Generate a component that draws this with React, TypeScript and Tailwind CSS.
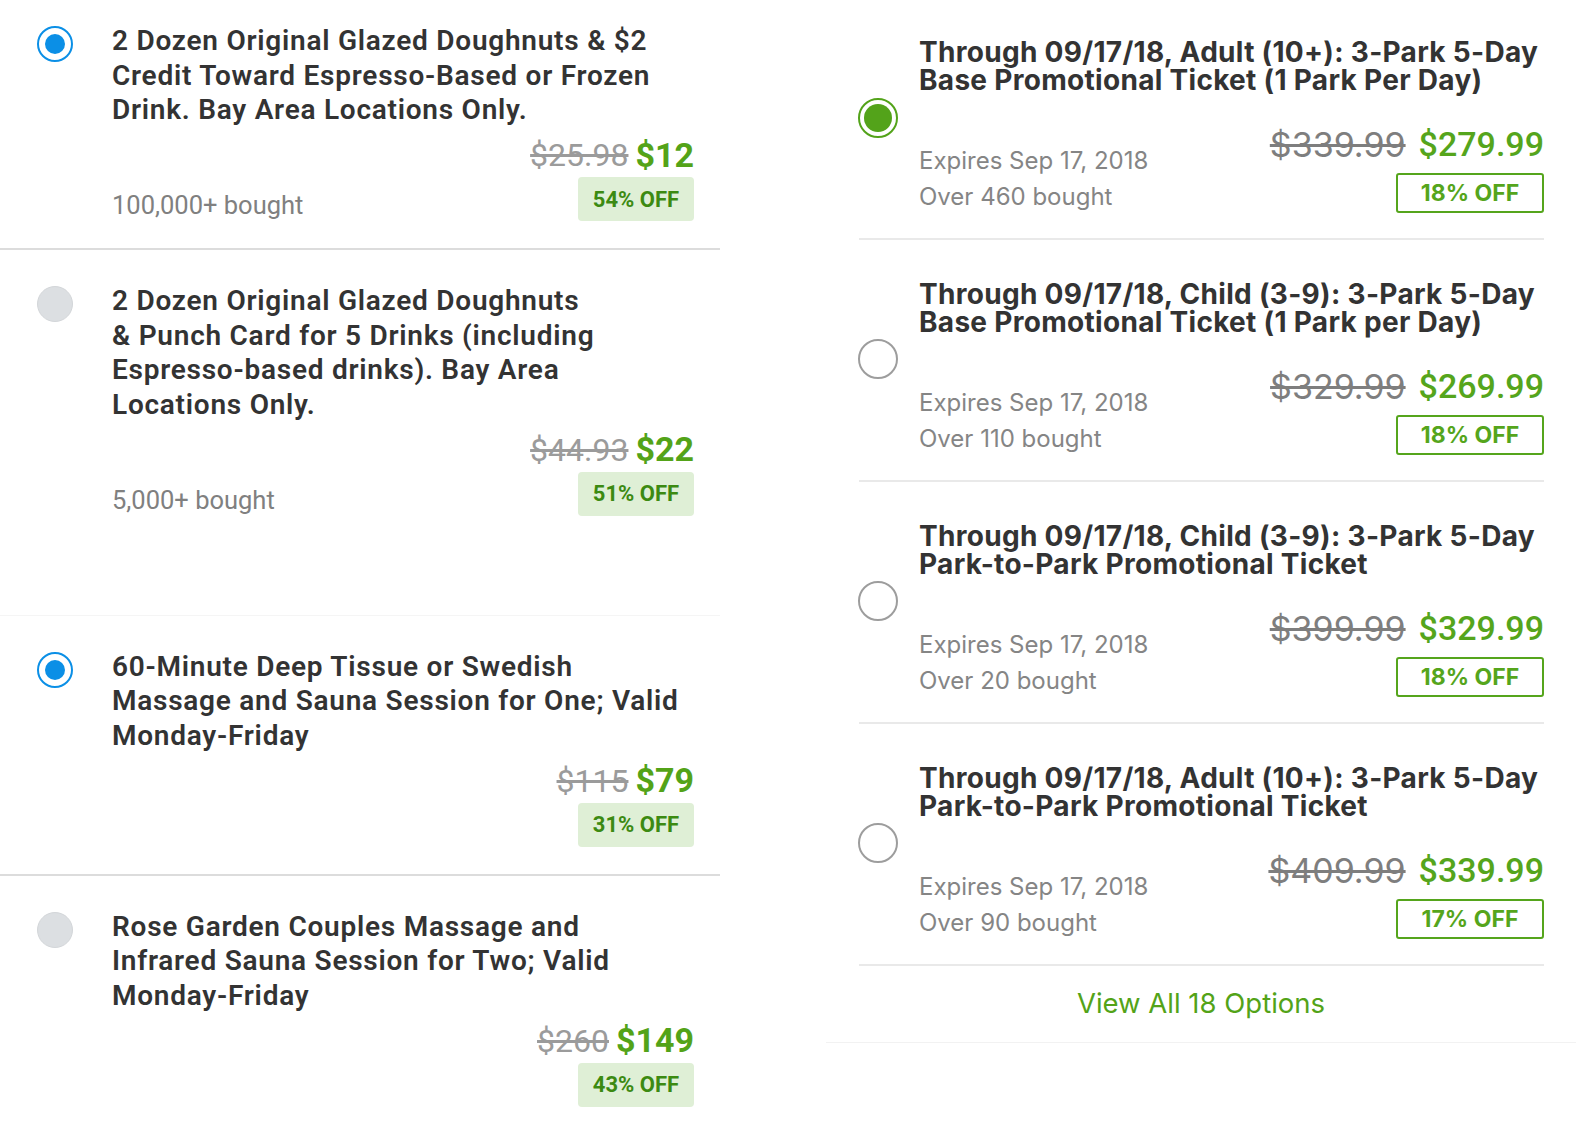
import React from "react";

type LeftDeal = {
    lines: string[];
    was: string;
    now: string;
    off: string;
    bought?: string;
    selected: boolean;
};

type RightDeal = {
    lines: string[];
    was: string;
    now: string;
    off: string;
    bought: string;
    selected: boolean;
};

const leftDeals: LeftDeal[] = [
    {
        lines: [
            "2 Dozen Original Glazed Doughnuts & $2",
            "Credit Toward Espresso-Based or Frozen",
            "Drink. Bay Area Locations Only.",
        ],
        was: "$25.98",
        now: "$12",
        off: "54% OFF",
        bought: "100,000+ bought",
        selected: true,
    },
    {
        lines: [
            "2 Dozen Original Glazed Doughnuts",
            "& Punch Card for 5 Drinks (including",
            "Espresso-based drinks). Bay Area",
            "Locations Only.",
        ],
        was: "$44.93",
        now: "$22",
        off: "51% OFF",
        bought: "5,000+ bought",
        selected: false,
    },
    {
        lines: [
            "60-Minute Deep Tissue or Swedish",
            "Massage and Sauna Session for One; Valid",
            "Monday-Friday",
        ],
        was: "$115",
        now: "$79",
        off: "31% OFF",
        selected: true,
    },
    {
        lines: [
            "Rose Garden Couples Massage and",
            "Infrared Sauna Session for Two; Valid",
            "Monday-Friday",
        ],
        was: "$260",
        now: "$149",
        off: "43% OFF",
        selected: false,
    },
];

const rightDeals: RightDeal[] = [
    {
        lines: ["Through 09/17/18, Adult (10+): 3-Park 5-Day", "Base Promotional Ticket (1 Park Per Day)"],
        was: "$339.99",
        now: "$279.99",
        off: "18% OFF",
        bought: "Over 460 bought",
        selected: true,
    },
    {
        lines: ["Through 09/17/18, Child (3-9): 3-Park 5-Day", "Base Promotional Ticket (1 Park per Day)"],
        was: "$329.99",
        now: "$269.99",
        off: "18% OFF",
        bought: "Over 110 bought",
        selected: false,
    },
    {
        lines: ["Through 09/17/18, Child (3-9): 3-Park 5-Day", "Park-to-Park Promotional Ticket"],
        was: "$399.99",
        now: "$329.99",
        off: "18% OFF",
        bought: "Over 20 bought",
        selected: false,
    },
    {
        lines: ["Through 09/17/18, Adult (10+): 3-Park 5-Day", "Park-to-Park Promotional Ticket"],
        was: "$409.99",
        now: "$339.99",
        off: "17% OFF",
        bought: "Over 90 bought",
        selected: false,
    },
];

function LeftRadio({ selected }: { selected: boolean }) {
    if (selected) {
        return (
            <div className="w-[36px] h-[36px] rounded-full border-2 border-[#0b8fe6] flex items-center justify-center">
                <div className="w-[20px] h-[20px] rounded-full bg-[#0b8fe6]" />
            </div>
        );
    }
    return <div className="w-[36px] h-[36px] rounded-full bg-[#dcdfe2] border border-[#d3d6d9]" />;
}

function RightRadio({ selected }: { selected: boolean }) {
    if (selected) {
        return (
            <div className="w-[40px] h-[40px] rounded-full border-2 border-[#53a31a] flex items-center justify-center">
                <div className="w-[28px] h-[28px] rounded-full bg-[#53a31a]" />
            </div>
        );
    }
    return <div className="w-[40px] h-[40px] rounded-full border-2 border-[#9d9d9d]" />;
}

function LeftItem({ deal, first }: { deal: LeftDeal; first: boolean }) {
    return (
        <div className={`flex pr-[26px] pb-[27px] ${first ? "pt-[24px]" : "pt-[34px]"}`}>
            <div className="w-[112px] shrink-0 pl-[37px] pt-[2px]">
                <LeftRadio selected={deal.selected} />
            </div>
            <div className="flex-1">
                <div className="text-[28px] leading-[34.5px] font-semibold tracking-[0.75px] text-[#333333]">
                    {deal.lines.map((l) => (
                        <div key={l} className="whitespace-nowrap">
                            {l}
                        </div>
                    ))}
                </div>
                <div className="mt-[7.5px] h-[40px] flex items-center justify-end gap-[7px]">
                    <span className="text-[32px] text-[#9b9b9b] line-through">{deal.was}</span>
                    <span className="text-[34px] font-bold text-[#53a318]">{deal.now}</span>
                </div>
                <div className="mt-[2px] flex items-end justify-between">
                    <span className="mb-[2px] text-[25.5px] leading-[28px] text-[#808080]">{deal.bought}</span>
                    <span className="w-[116px] h-[44px] rounded-[4px] bg-[#dfefd6] flex items-center justify-center text-[22px] font-bold text-[#3c8a12]">
                        {deal.off}
                    </span>
                </div>
            </div>
        </div>
    );
}

function RightItem({ deal, first }: { deal: RightDeal; first: boolean }) {
    return (
        <div className="flex items-center border-b-2 border-[#e9e9e9]">
            <div className="w-[61px] shrink-0 -ml-[1px] mb-[2px]">
                <RightRadio selected={deal.selected} />
            </div>
            <div className={`flex-1 pb-[25px] ${first ? "pt-[38px]" : "pt-[40px]"}`}>
                <div className="font-['Inter',sans-serif] text-[28px] leading-[28px] font-bold tracking-[0.3px] text-[#333333]">
                    {deal.lines.map((l) => (
                        <div key={l} className="whitespace-nowrap">
                            {l}
                        </div>
                    ))}
                </div>
                <div className="mt-[30px] flex items-end justify-between">
                    <div className="-mb-[2px] font-['Inter',sans-serif] text-[24px] leading-[36px] text-[#858585]">
                        <div>Expires Sep 17, 2018</div>
                        <div>{deal.bought}</div>
                    </div>
                    <div className="flex flex-col items-end">
                        <div className="h-[40px] flex items-center gap-[13px] text-[34px]">
                            <span className="font-['Inter',sans-serif] text-[#7e7e7e] line-through">{deal.was}</span>
                            <span className="font-medium text-[#55a51c]">{deal.now}</span>
                        </div>
                        <div className="mt-[9px] w-[148px] h-[40px] rounded-[3px] border-2 border-[#55a51c] flex items-center justify-center font-['Inter',sans-serif] text-[23px] font-bold text-[#55a51c]">
                            {deal.off}
                        </div>
                    </div>
                </div>
            </div>
        </div>
    );
}

export default function App() {
    return (
        <div className="w-[1576px] h-[1134px] bg-white flex overflow-hidden font-['Roboto','Liberation_Sans',sans-serif]">
            <div className="w-[720px] shrink-0">
                <div className="border-b-2 border-[#dcdcdc]">
                    <LeftItem deal={leftDeals[0]} first />
                </div>
                <LeftItem deal={leftDeals[1]} first={false} />
                <div className="h-[73px] border-b border-[#f5f5f5]" />
                <div className="border-b-2 border-[#dcdcdc]">
                    <LeftItem deal={leftDeals[2]} first={false} />
                </div>
                <LeftItem deal={leftDeals[3]} first={false} />
            </div>
            <div className="w-[106px] shrink-0" />
            <div className="w-[750px] shrink-0">
                <div className="pl-[33px] pr-[32px]">
                    {rightDeals.map((d, i) => (
                        <RightItem key={i} deal={d} first={i === 0} />
                    ))}
                </div>
                <div className="h-[77px] border-b border-[#f2f2f2] flex items-center justify-center font-['Inter',sans-serif] text-[27.5px] text-[#53a318]">
                    View All 18 Options
                </div>
            </div>
        </div>
    );
}
